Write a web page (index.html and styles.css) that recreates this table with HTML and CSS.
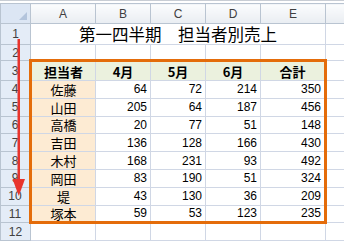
FILE: index.html
```html
<!DOCTYPE html>
<html lang="ja">
<head>
<meta charset="utf-8">
<link rel="stylesheet" href="styles.css">
</head>
<body>
<div class="sheet">
  <table class="grid">
    <colgroup>
      <col class="c-hd"><col class="c-a"><col class="c-n"><col class="c-n"><col class="c-n"><col class="c-a"><col class="c-f">
    </colgroup>
    <thead>
      <tr class="r-hd">
        <th class="corner"><span class="tri"></span></th><th>A</th><th>B</th><th>C</th><th>D</th><th>E</th><th></th>
      </tr>
    </thead>
    <tbody>
      <tr class="r1"><th>1</th><td colspan="5" class="title">第一四半期　担当者別売上</td><td></td></tr>
      <tr class="r2"><th>2</th><td></td><td></td><td></td><td></td><td></td><td></td></tr>
      <tr class="r3 top"><th>3</th><td class="h lft">担当者</td><td class="h">4月</td><td class="h">5月</td><td class="h">6月</td><td class="h rgt">合計</td><td></td></tr>
      <tr><th>4</th><td class="nm lft">佐藤</td><td class="n">64</td><td class="n">72</td><td class="n">214</td><td class="n rgt">350</td><td></td></tr>
      <tr><th>5</th><td class="nm lft">山田</td><td class="n">205</td><td class="n">64</td><td class="n">187</td><td class="n rgt">456</td><td></td></tr>
      <tr><th>6</th><td class="nm lft">高橋</td><td class="n">20</td><td class="n">77</td><td class="n">51</td><td class="n rgt">148</td><td></td></tr>
      <tr><th>7</th><td class="nm lft">吉田</td><td class="n">136</td><td class="n">128</td><td class="n">166</td><td class="n rgt">430</td><td></td></tr>
      <tr><th>8</th><td class="nm lft">木村</td><td class="n">168</td><td class="n">231</td><td class="n">93</td><td class="n rgt">492</td><td></td></tr>
      <tr><th>9</th><td class="nm lft">岡田</td><td class="n">83</td><td class="n">190</td><td class="n">51</td><td class="n rgt">324</td><td></td></tr>
      <tr><th>10</th><td class="nm lft">堤</td><td class="n">43</td><td class="n">130</td><td class="n">36</td><td class="n rgt">209</td><td></td></tr>
      <tr class="bot"><th>11</th><td class="nm lft">塚本</td><td class="n">59</td><td class="n">53</td><td class="n">123</td><td class="n rgt">235</td><td></td></tr>
      <tr><th>12</th><td></td><td></td><td></td><td></td><td></td><td></td></tr>
    </tbody>
  </table>
  <svg class="arrow" width="14" height="162" viewBox="0 0 14 162">
    <rect x="5.5" y="0" width="2.5" height="142" fill="#e8342c"/>
    <path d="M0.5 140 L13 140 L6.8 157 Z" fill="#e8342c"/>
  </svg>
</div>
</body>
</html>
```
FILE: styles.css
```css
html, body {
  margin: 0;
  padding: 0;
  background: #ffffff;
}
.sheet {
  position: relative;
  width: 344px;
  height: 243px;
  overflow: hidden;
  padding-top: 2px;
  box-sizing: border-box;
  border-top: 1px solid #c8cdd4;
}
.grid {
  border-collapse: collapse;
  table-layout: fixed;
  width: 360px;
  font-family: "Noto Sans CJK JP", "Liberation Sans", sans-serif;
  font-size: 13px;
  color: #000;
}
.c-hd { width: 30px; }
.c-a { width: 65px; }
.c-n { width: 55px; }
.c-f { width: 35px; }
.grid td, .grid th {
  padding: 0;
  border: 1px solid #d0d7e5;
  line-height: 1;
  white-space: nowrap;
  overflow: hidden;
}
.grid thead th {
  height: 19px;
  background: linear-gradient(#fbfcfd, #e9edf2);
  border-color: #b9c4d1;
  font-family: "Liberation Sans", sans-serif;
  font-weight: normal;
  font-size: 12px;
  color: #404040;
}
.grid tbody th {
  background: #e4ecf7;
  border-color: #b9c4d1;
  font-family: "Liberation Sans", sans-serif;
  font-weight: normal;
  font-size: 12px;
  color: #404040;
  text-align: center;
}
.grid thead th.corner {
  background: #dce6f4;
  position: relative;
}
.tri {
  position: absolute;
  right: 3px;
  bottom: 3px;
  width: 0;
  height: 0;
  border-left: 8px solid transparent;
  border-bottom: 8px solid #b3c4dc;
}
.grid tbody tr { height: 17.8px; }
.grid tbody tr.r1 { height: 21px; }
.grid tbody tr.r2 { height: 16px; }
.grid tbody tr.r3 { height: 20px; }
.grid td.title {
  text-align: center;
  font-size: 16.5px;
  line-height: 20px;
  overflow: visible;
  vertical-align: bottom;
}
.h {
  background: #ebf1de;
  font-weight: bold;
  text-align: center;
}
.nm {
  background: #fdebd3;
  text-align: center;
}
.n {
  text-align: right;
  padding-right: 3px !important;
  font-family: "Liberation Sans", sans-serif;
  font-size: 12px;
}
.top td.h { border-top: 3px solid #e46c0a; }
.bot td.nm, .bot td.n { border-bottom: 3px solid #e46c0a; }
.lft { border-left: 3px solid #e46c0a !important; }
.rgt { border-right: 3px solid #e46c0a !important; }
.arrow {
  position: absolute;
  left: 12px;
  top: 38px;
}
```
